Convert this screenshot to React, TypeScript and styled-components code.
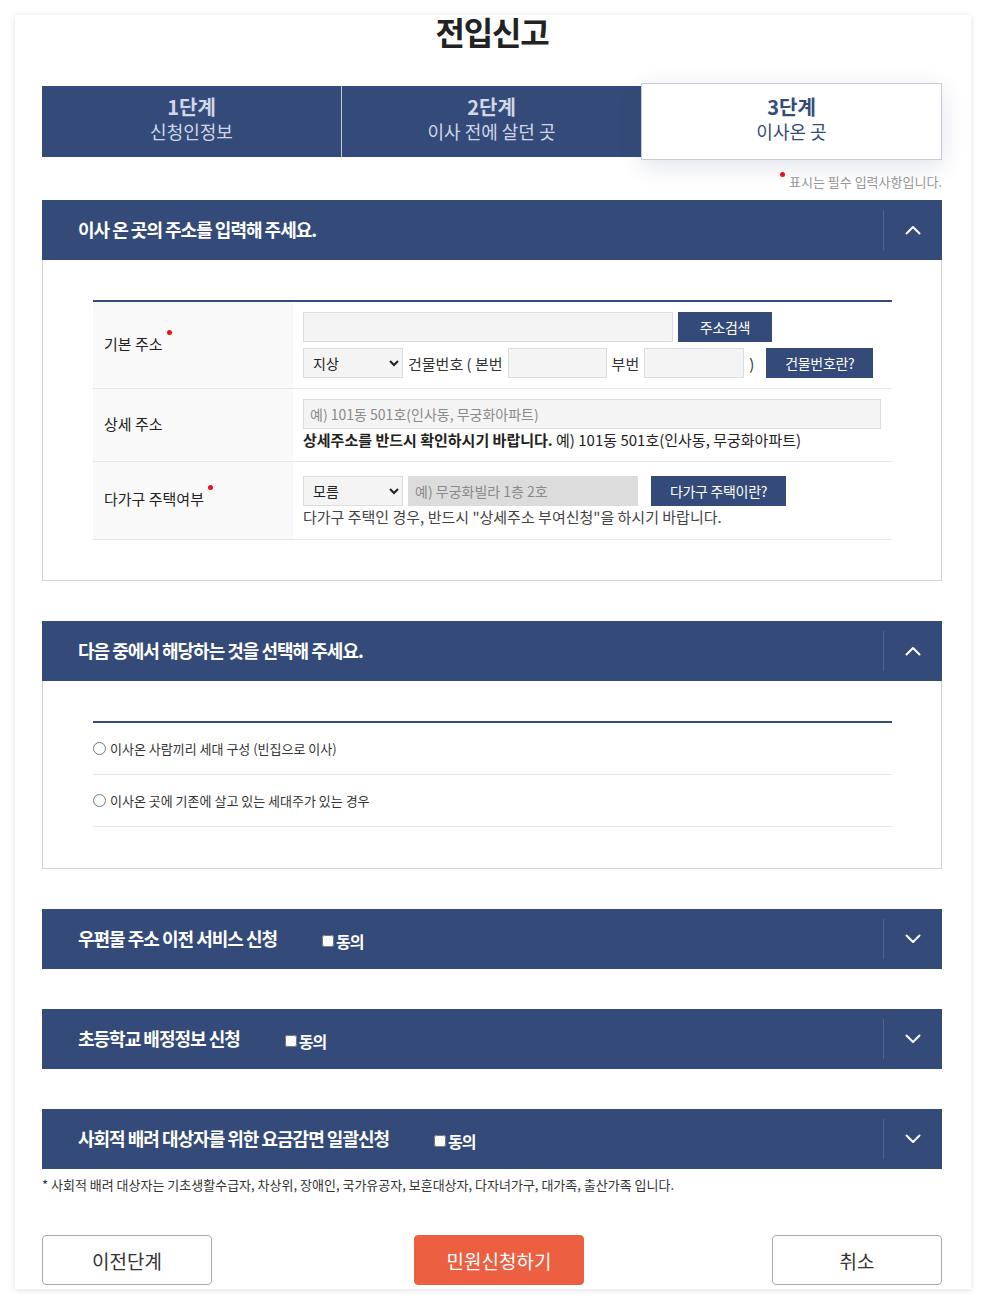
import React from "react";
import styled, { createGlobalStyle } from "styled-components";

const NAVY = "#344b79";

const GlobalStyle = createGlobalStyle`
	* {
		box-sizing: border-box;
	}
	html,
	body {
		margin: 0;
		padding: 0;
		background: #ffffff;
	}
	body {
		font-family: "Noto Sans CJK KR", "Noto Sans", sans-serif;
		color: #222;
	}
`;

const Chevron: React.FC<{ up?: boolean }> = ({ up }) => (
	<svg width="16" height="10" viewBox="0 0 16 10" fill="none">
		<polyline
			points={up ? "1.5,8.5 8,2 14.5,8.5" : "1.5,1.5 8,8 14.5,1.5"}
			stroke="#fff"
			strokeWidth="2"
			strokeLinecap="round"
			strokeLinejoin="round"
		/>
	</svg>
);

const steps = [
	{ num: "1단계", label: "신청인정보" },
	{ num: "2단계", label: "이사 전에 살던 곳" },
	{ num: "3단계", label: "이사온 곳" },
];

const radios = [
	"이사온 사람끼리 세대 구성 (빈집으로 이사)",
	"이사온 곳에 기존에 살고 있는 세대주가 있는 경우",
];

const App: React.FC = () => {
	return (
		<>
			<GlobalStyle />
			<Page>
				<Card>
					<Title>전입신고</Title>

					<StepBar>
						{steps.map((s, i) => (
							<Step key={s.num} $active={i === 2}>
								<StepNum>{s.num}</StepNum>
								<StepLabel>{s.label}</StepLabel>
							</Step>
						))}
					</StepBar>

					<RequiredNote>
						<Dot />
						표시는 필수 입력사항입니다.
					</RequiredNote>

					<Sections>
						<section>
							<SectionHeader>
								<HeaderTitle>이사 온 곳의 주소를 입력해 주세요.</HeaderTitle>
								<Toggle aria-label="접기">
									<Chevron up />
								</Toggle>
							</SectionHeader>
							<SectionBody>
								<FormTable>
									<tbody>
										<tr>
											<Label>
												기본 주소
												<Dot $inline />
											</Label>
											<Cell>
												<Line>
													<TextInput $w={370} />
													<NavyButton $w={94}>주소검색</NavyButton>
												</Line>
												<Line>
													<Select defaultValue="지상">
														<option>지상</option>
														<option>지하</option>
													</Select>
													<Text>건물번호 ( 본번</Text>
													<TextInput $w={99} />
													<Text>부번</Text>
													<TextInput $w={100} />
													<Text>)</Text>
													<NavyButton $w={107} $offset={7}>
														건물번호란?
													</NavyButton>
												</Line>
											</Cell>
										</tr>
										<tr>
											<Label>상세 주소</Label>
											<Cell>
												<TextInput
													$w={578}
													placeholder="예) 101동 501호(인사동, 무궁화아파트)"
												/>
												<Help>
													<strong>상세주소를 반드시 확인하시기 바랍니다.</strong> 예)
													101동 501호(인사동, 무궁화아파트)
												</Help>
											</Cell>
										</tr>
										<tr>
											<Label>
												다가구 주택여부
												<Dot $inline />
											</Label>
											<Cell $tall>
												<Line>
													<Select defaultValue="모름">
														<option>모름</option>
														<option>예</option>
														<option>아니오</option>
													</Select>
													<TextInput
														$w={230}
														disabled
														placeholder="예) 무궁화빌라 1층 2호"
													/>
													<NavyButton $w={135} $offset={8}>
														다가구 주택이란?
													</NavyButton>
												</Line>
												<Help $muted>
													다가구 주택인 경우, 반드시 "상세주소 부여신청"을 하시기
													바랍니다.
												</Help>
											</Cell>
										</tr>
									</tbody>
								</FormTable>
							</SectionBody>
						</section>

						<section>
							<SectionHeader>
								<HeaderTitle>다음 중에서 해당하는 것을 선택해 주세요.</HeaderTitle>
								<Toggle aria-label="접기">
									<Chevron up />
								</Toggle>
							</SectionHeader>
							<SectionBody $bottom={41}>
								<RadioList>
									{radios.map((r) => (
										<RadioItem key={r}>
											<input type="radio" name="household" />
											{r}
										</RadioItem>
									))}
								</RadioList>
							</SectionBody>
						</section>

						<SectionHeader>
							<HeaderTitle>우편물 주소 이전 서비스 신청</HeaderTitle>
							<Agree>
								<input type="checkbox" />
								동의
							</Agree>
							<Toggle aria-label="펼치기">
								<Chevron />
							</Toggle>
						</SectionHeader>

						<SectionHeader>
							<HeaderTitle>초등학교 배정정보 신청</HeaderTitle>
							<Agree>
								<input type="checkbox" />
								동의
							</Agree>
							<Toggle aria-label="펼치기">
								<Chevron />
							</Toggle>
						</SectionHeader>

						<div>
							<SectionHeader>
								<HeaderTitle>사회적 배려 대상자를 위한 요금감면 일괄신청</HeaderTitle>
								<Agree>
									<input type="checkbox" />
									동의
								</Agree>
								<Toggle aria-label="펼치기">
									<Chevron />
								</Toggle>
							</SectionHeader>
							<Footnote>
								* 사회적 배려 대상자는 기초생활수급자, 차상위, 장애인, 국가유공자,
								보훈대상자, 다자녀가구, 대가족, 출산가족 입니다.
							</Footnote>
						</div>
					</Sections>

					<Actions>
						<ActionButton>이전단계</ActionButton>
						<ActionButton $primary>민원신청하기</ActionButton>
						<ActionButton>취소</ActionButton>
					</Actions>
				</Card>
			</Page>
		</>
	);
};

export default App;

const Page = styled.div`
	padding: 15px;
`;

const Card = styled.div`
	background: #fff;
	box-shadow: 0 1px 6px rgba(0, 0, 0, 0.13);
	padding: 0 29px 4px 27px;
`;

const Title = styled.h1`
	margin: 0;
	text-align: center;
	font-size: 32px;
	line-height: 32px;
	font-weight: 700;
	letter-spacing: -1.2px;
	color: #222;
`;

const StepBar = styled.ol`
	display: flex;
	height: 71px;
	margin: 39px 0 0;
	padding: 0;
	list-style: none;
	background: ${NAVY};
`;

const Step = styled.li<{ $active?: boolean }>`
	flex: 1;
	display: flex;
	flex-direction: column;
	align-items: center;
	justify-content: center;
	padding-bottom: 5px;
	color: ${({ $active }) => ($active ? NAVY : "#cfd7e8")};
	background: ${({ $active }) => ($active ? "#fff" : "transparent")};
	border: ${({ $active }) => ($active ? "1px solid #c6cbd6" : "0")};
	margin: ${({ $active }) => ($active ? "-3px 0" : "0")};
	box-shadow: ${({ $active }) =>
		$active ? "0 6px 22px rgba(40, 60, 110, 0.14)" : "none"};
	position: relative;

	& + & {
		border-left: 1px solid ${({ $active }) => ($active ? "#c6cbd6" : "#475c86")};
	}
`;

const StepNum = styled.strong`
	font-size: 20px;
	line-height: 25px;
	font-weight: 700;
`;

const StepLabel = styled.span`
	font-size: 18px;
	line-height: 25px;
`;

const RequiredNote = styled.p`
	margin: 15px 0 8px;
	text-align: right;
	font-size: 13px;
	line-height: 20px;
	color: #999;
`;

const Dot = styled.span<{ $inline?: boolean }>`
	display: inline-block;
	width: 5px;
	height: 5px;
	border-radius: 50%;
	background: #ee1111;
	vertical-align: top;
	margin: ${({ $inline }) => ($inline ? "-3px 0 0 4px" : "0 4px 0 0")};
`;

const Sections = styled.div`
	display: flex;
	flex-direction: column;
	gap: 40px;
`;

const SectionHeader = styled.div`
	display: flex;
	align-items: center;
	height: 60px;
	padding-left: 36px;
	background: ${NAVY};
	color: #fff;
`;

const HeaderTitle = styled.h2`
	margin: 0 0 2px;
	font-size: 18px;
	font-weight: 700;
	letter-spacing: -1px;
	line-height: 24px;
`;

const Agree = styled.label`
	display: flex;
	align-items: center;
	margin: 4px 0 0 45px;
	font-size: 16px;
	font-weight: 700;
	letter-spacing: -1px;

	input {
		width: 12px;
		height: 12px;
		margin: 0 2px 0 0;
	}
`;

const Toggle = styled.button`
	margin-left: auto;
	width: 59px;
	height: 40px;
	display: flex;
	align-items: center;
	justify-content: center;
	background: none;
	border: 0;
	border-left: 1px solid rgba(255, 255, 255, 0.14);
	padding: 0;
	cursor: pointer;
`;

const SectionBody = styled.div<{ $bottom?: number }>`
	border: 1px solid #d2d2d2;
	border-top: 0;
	padding: 40px 49px ${({ $bottom }) => $bottom ?? 40}px 50px;
`;

const FormTable = styled.table`
	width: 100%;
	border-collapse: collapse;
	border-top: 2px solid ${NAVY};
`;

const Label = styled.th`
	width: 200px;
	padding: 0 0 4px 11px;
	background: #f9f9f9;
	text-align: left;
	font-size: 15px;
	font-weight: 400;
	color: #222;
	border-bottom: 1px solid #e8e8e8;
`;

const Cell = styled.td<{ $tall?: boolean }>`
	padding: ${({ $tall }) => ($tall ? "14px 10px 11px" : "10px")};
	border-bottom: 1px solid #e8e8e8;
	vertical-align: middle;
`;

const Line = styled.div`
	display: flex;
	align-items: center;
	gap: 5px;

	& + & {
		margin-top: 6px;
	}
`;

const TextInput = styled.input<{ $w: number }>`
	display: block;
	width: ${({ $w }) => $w}px;
	height: 30px;
	padding: 0 6px;
	background: ${({ disabled }) => (disabled ? "#dcdcdc" : "#f4f4f4")};
	border: 1px solid ${({ disabled }) => (disabled ? "#dcdcdc" : "#dddddd")};
	font-family: inherit;
	font-size: 14px;
	color: #222;

	&::placeholder {
		color: #8a8a8a;
	}
`;

const Select = styled.select`
	width: 100px;
	height: 30px;
	padding: 0 6px 0 5px;
	background: #f4f4f4;
	border: 1px solid #dddddd;
	border-radius: 0;
	font-family: inherit;
	font-size: 14px;
	color: #222;
`;

const Text = styled.span`
	font-size: 15px;
	color: #333;
`;

const NavyButton = styled.button<{ $w: number; $offset?: number }>`
	width: ${({ $w }) => $w}px;
	height: 30px;
	margin-left: ${({ $offset }) => $offset ?? 0}px;
	padding: 0;
	background: ${NAVY};
	color: #fff;
	border: 0;
	font-family: inherit;
	font-size: 14px;
	letter-spacing: -0.3px;
	cursor: pointer;
`;

const Help = styled.p<{ $muted?: boolean }>`
	margin: 0;
	font-size: 15px;
	line-height: 22px;
	color: ${({ $muted }) => ($muted ? "#444" : "#222")};

	strong {
		font-weight: 700;
	}
`;

const RadioList = styled.ul`
	margin: 0;
	padding: 0;
	list-style: none;
	border-top: 2px solid ${NAVY};
`;

const RadioItem = styled.li`
	display: flex;
	align-items: center;
	height: 52px;
	border-bottom: 1px solid #e8e8e8;
	font-size: 13px;
	color: #333;

	input {
		margin: 0 4px 0 0;
		width: 13px;
		height: 13px;
	}
`;

const Footnote = styled.p`
	margin: 7px 0 0;
	font-size: 13px;
	line-height: 18px;
	color: #333;
`;

const Actions = styled.div`
	display: flex;
	justify-content: space-between;
	margin-top: 41px;
`;

const ActionButton = styled.button<{ $primary?: boolean }>`
	width: 170px;
	height: 50px;
	border-radius: 4px;
	border: 1px solid ${({ $primary }) => ($primary ? "#ec5f40" : "#aaaaaa")};
	background: ${({ $primary }) => ($primary ? "#ec5f40" : "#fff")};
	color: ${({ $primary }) => ($primary ? "#fff" : "#333")};
	font-family: inherit;
	font-size: 19px;
	cursor: pointer;
	margin-left: ${({ $primary }) => ($primary ? "14px" : "0")};
`;
